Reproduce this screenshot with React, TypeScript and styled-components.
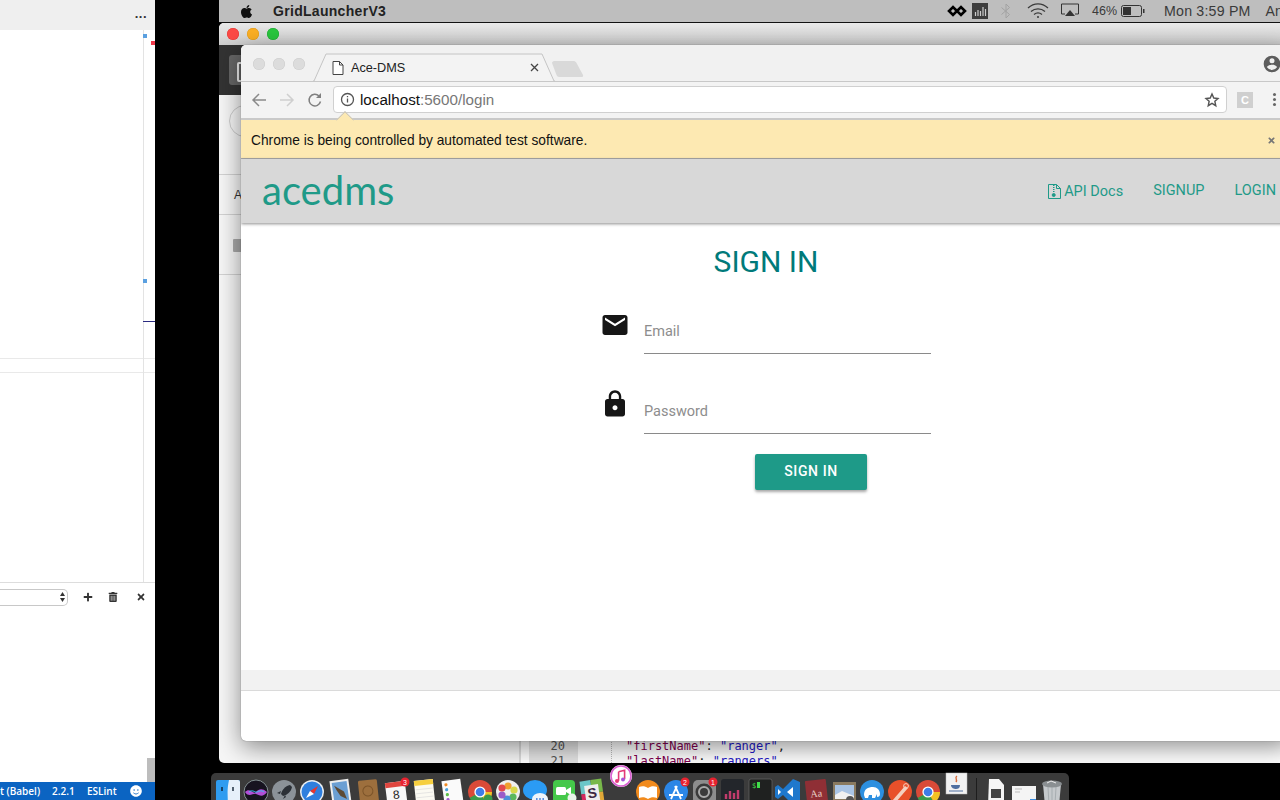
import React from "react";
import styled, { createGlobalStyle } from "styled-components";
import { FaApple, FaPlus, FaTrashAlt, FaTimes, FaSmile } from "react-icons/fa";

const Global = createGlobalStyle`
  html, body { margin: 0; padding: 0; background: #000; overflow: hidden; }
  * { box-sizing: border-box; }
`;

const Desktop = styled.div`
  position: relative;
  width: 1280px;
  height: 800px;
  overflow: hidden;
  background: #000;
  font-family: "Liberation Sans", Arial, sans-serif;
`;

/* ---------- left editor window ---------- */
const EditorWindow = styled.section`
  position: absolute;
  left: 0;
  top: 0;
  width: 155px;
  height: 800px;
  background: #fff;
  display: flex;
  flex-direction: column;
`;
const EditorTabs = styled.div`
  height: 30px;
  flex: none;
  background: #efefef;
  display: flex;
  justify-content: flex-end;
  align-items: center;
  padding: 0 8px 4px 0;
  font-size: 13px;
  font-weight: 700;
  letter-spacing: 0.5px;
  color: #333;
`;
const EditorPane = styled.div`
  position: relative;
  height: 553px;
  flex: none;
  border-bottom: 1px solid #ddd;
  display: flex;
  flex-direction: column;
`;
const GuideLine = styled.div`
  position: absolute;
  left: 143px;
  top: 0;
  bottom: 0;
  width: 1px;
  background: #e3e3e3;
`;
const Marker = styled.i<{ $x: number; $y: number; $c: string; $w?: number; $h?: number }>`
  position: absolute;
  left: ${(p) => p.$x}px;
  top: ${(p) => p.$y}px;
  width: ${(p) => p.$w ?? 4}px;
  height: ${(p) => p.$h ?? 4}px;
  background: ${(p) => p.$c};
`;
const PaneRule = styled.div`
  height: 15px;
  margin-top: 328px;
  border-top: 1px solid #e9e9e9;
  border-bottom: 1px solid #e9e9e9;
`;
const ConsoleBar = styled.div`
  height: 30px;
  flex: none;
  display: flex;
  align-items: center;
  padding-bottom: 2px;
  color: #333;
`;
const FakeSelect = styled.div`
  width: 68px;
  height: 17px;
  border: 1px solid #c8c8c8;
  border-left: 0;
  border-radius: 0 5px 5px 0;
  background: #fff;
  display: flex;
  align-items: center;
  justify-content: flex-end;
  padding-right: 2px;
  margin-right: 15px;
`;
const ConsoleAction = styled.span<{ $w: number }>`
  width: ${(p) => p.$w}px;
  display: flex;
  font-size: 10px;
`;
const EditorFill = styled.div`
  position: relative;
  flex: 1;
`;
const Thumb = styled.div`
  position: absolute;
  right: 0;
  bottom: 0;
  width: 8px;
  height: 24px;
  background: #bdbdbd;
`;
const StatusBar = styled.footer`
  height: 18px;
  flex: none;
  background: #0b64c2;
  color: #fff;
  display: flex;
  align-items: center;
  font-size: 10px;
  font-family: "Open Sans", sans-serif;
  font-weight: 600;
  white-space: nowrap;
  overflow: hidden;
`;
const StatusItem = styled.span<{ $w: number }>`
  width: ${(p) => p.$w}px;
  flex: none;
  display: flex;
  align-items: center;
`;

/* ---------- menu bar ---------- */
const MenuBar = styled.header`
  position: absolute;
  left: 219px;
  top: 0;
  width: 1061px;
  height: 23px;
  background: #bebebe;
  border-bottom: 1px solid #111;
  display: flex;
  align-items: center;
  color: #3a3a3a;
  font-size: 14px;
  white-space: nowrap;
  overflow: hidden;
`;
const AppleSlot = styled.span`
  margin-left: 20px;
  width: 34px;
  display: flex;
  color: #111;
  font-size: 15px;
`;
const AppName = styled.strong`
  color: #222;
  font-size: 14px;
  letter-spacing: 0.3px;
  flex: 1;
`;
const Extras = styled.div`
  display: flex;
  align-items: center;
  width: 333px;
  flex: none;
  svg {
    flex: none;
  }
`;
const ExtrasGap = styled.span`
  width: 13px;
  flex: none;
`;
const Percent = styled.span`
  flex: none;
  font-size: 12.5px;
  margin-right: 4px;
`;
const Clock = styled.span`
  flex: none;
  margin-left: 19px;
  margin-right: 15px;
  font-size: 14.2px;
  letter-spacing: 0.2px;
`;

/* ---------- window behind ---------- */
const BackWindow = styled.section`
  position: absolute;
  left: 219px;
  top: 23px;
  width: 1061px;
  height: 740px;
  border-radius: 5px 0 0 5px;
  background: #f6f6f6;
  display: flex;
  flex-direction: column;
  overflow: hidden;
`;
const BackTitle = styled.div`
  height: 22px;
  flex: none;
  background: linear-gradient(#e9e9e9, #cfcfcf);
  display: flex;
  align-items: center;
  gap: 8px;
  padding-left: 8px;
`;
const Light = styled.i<{ $c: string; $b: string }>`
  width: 12px;
  height: 12px;
  border-radius: 50%;
  background: ${(p) => p.$c};
  box-shadow: inset 0 0 0 0.5px ${(p) => p.$b};
`;
const BackToolbar = styled.div`
  height: 50px;
  flex: none;
  background: #333;
  padding: 10px;
`;
const BackTool = styled.div`
  width: 30px;
  height: 30px;
  border-radius: 3px;
  background: #666;
  padding: 7px 0 0 8px;
  &::after {
    content: "";
    display: block;
    width: 14px;
    height: 16px;
    border: 2px solid #eee;
    border-radius: 2px;
  }
`;
const BackSearch = styled.div`
  height: 80px;
  flex: none;
  border-bottom: 1px solid #d2d2d2;
  padding: 10px 0 0 10px;
  &::after {
    content: "";
    display: block;
    width: 30px;
    height: 30px;
    border-radius: 50%;
    border: 1px solid #ccc;
  }
`;
const BackRow = styled.div`
  height: 40px;
  flex: none;
  border-bottom: 1px solid #d2d2d2;
  padding-left: 15px;
  display: flex;
  align-items: center;
  font-size: 12px;
  color: #333;
`;
const BackFolderRow = styled.div`
  height: 60px;
  flex: none;
  border-bottom: 1px solid #d2d2d2;
  padding: 24px 0 0 14px;
  &::after {
    content: "";
    display: block;
    width: 14px;
    height: 13px;
    background: #aaa;
    border-radius: 1px;
  }
`;
const BackBody = styled.div`
  flex: 1;
  display: flex;
  align-items: flex-end;
  padding-left: 300px;
`;
const Editor = styled.div`
  flex: 1;
  height: 39px;
  border-left: 2px solid #dcdcdc;
  display: flex;
  background: #fff;
  font-family: "DejaVu Sans Mono", monospace;
  font-size: 12px;
  line-height: 15px;
  white-space: pre;
`;
const LineGutter = styled.div`
  width: 49px;
  margin-left: 8px;
  background: #e4e4e4;
  color: #555;
  text-align: right;
  padding: 15px 13px 0 0;
`;
const CodeBlock = styled.div`
  margin-left: 33px;
  border-left: 1px dotted #bbb;
  padding: 15px 0 0 14px;
  color: #222;
`;
const Key = styled.span`
  color: #80004f;
`;
const Val = styled.span`
  color: #2418c8;
`;

/* ---------- chrome window ---------- */
const Chrome = styled.section`
  position: absolute;
  left: 241px;
  top: 45px;
  width: 1050px;
  height: 696px;
  border-radius: 5px 5px 5px 5px;
  background: #fff;
  box-shadow: 0 0 1px rgba(0, 0, 0, 0.6), 0 6px 24px rgba(0, 0, 0, 0.45);
  display: flex;
  flex-direction: column;
  overflow: hidden;
`;
const TabStrip = styled.div`
  height: 37px;
  flex: none;
  background: #f1f1f1;
  border-bottom: 1px solid #c8c8c8;
  display: flex;
  align-items: flex-end;
  padding-left: 12px;
  position: relative;
`;
const GreyLights = styled.div`
  display: flex;
  gap: 8px;
  align-self: flex-start;
  margin-top: 13px;
  width: 66px;
  flex: none;
`;
const GreyLight = styled.i`
  width: 12px;
  height: 12px;
  border-radius: 50%;
  background: #dcdcdc;
  box-shadow: inset 0 0 0 0.5px #ccc;
`;
const TabShape = styled.svg`
  position: absolute;
  left: 72px;
  bottom: -1px;
`;
const TabBody = styled.div`
  position: relative;
  width: 230px;
  height: 27px;
  display: flex;
  align-items: center;
  padding: 0 0 0 13px;
  font-size: 12.7px;
  color: #222;
`;
const TabLabel = styled.span`
  margin-left: 7px;
  flex: 1;
`;
const ProfileSlot = styled.span`
  position: absolute;
  right: 9px;
  top: 9px;
  display: flex;
`;
const NewTab = styled.svg`
  position: absolute;
  left: 310px;
  bottom: 4px;
`;
const Toolbar = styled.div`
  height: 38px;
  flex: none;
  background: #f3f3f3;
  border-bottom: 2px solid #c9c9c9;
  display: flex;
  align-items: center;
  padding: 0 0 1px 10px;
  position: relative;
`;
const NavIcons = styled.div`
  display: flex;
  align-items: center;
  gap: 12px;
  width: 82px;
  flex: none;
`;
const Omnibox = styled.div`
  width: 894px;
  height: 27px;
  flex: none;
  background: #fff;
  border: 1px solid #d0d0d0;
  border-radius: 4px;
  display: flex;
  align-items: center;
  padding: 0 6px 0 6px;
  font-size: 15.2px;
  color: #111;
`;
const UrlDim = styled.span`
  color: #777;
`;
const Url = styled.span`
  margin-left: 5px;
  flex: 1;
`;
const ExtBadge = styled.span`
  width: 16px;
  height: 16px;
  margin-left: 10px;
  background: #cfcfcf;
  color: #fff;
  font-size: 11px;
  font-weight: 700;
  display: flex;
  align-items: center;
  justify-content: center;
`;
const Dots = styled.span`
  margin-left: 20px;
  display: flex;
  flex-direction: column;
  gap: 2px;
  i {
    width: 3px;
    height: 3px;
    border-radius: 50%;
    background: #666;
  }
`;
const BubbleTip = styled.i`
  position: absolute;
  left: 96px;
  bottom: -2px;
  width: 16px;
  height: 16px;
  background: #fde9b2;
  border-left: 1px solid #bdbdbd;
  border-top: 1px solid #bdbdbd;
  transform: translateY(8px) rotate(45deg) scale(0.78);
`;
const InfoBar = styled.div`
  height: 39px;
  flex: none;
  background: #fde9b2;
  border-bottom: 1px solid #a9a9a9;
  display: flex;
  align-items: center;
  padding: 2px 0 0 10px;
  font-size: 13.75px;
  color: #111;
`;
const InfoText = styled.span`
  width: 1016px;
  flex: none;
`;
const InfoClose = styled.span`
  display: flex;
  color: #777;
  font-size: 9px;
`;
const AppNav = styled.nav`
  height: 64px;
  flex: none;
  background: #d8d8d8;
  box-shadow: 0 1px 3px rgba(0, 0, 0, 0.45);
  display: flex;
  align-items: center;
  padding: 0 15px 0 21px;
  font-family: Roboto, sans-serif;
  color: #1f9a88;
  position: relative;
`;
const Logo = styled.div`
  font-family: Lato, sans-serif;
  font-size: 40px;
  color: #1f9a88;
  flex: 1;
  padding-bottom: 3px;
`;
const DocsLink = styled.a`
  display: flex;
  align-items: center;
  font-size: 14.5px;
  margin-right: 30px;
`;
const NavLink = styled.a`
  font-size: 14.5px;
  padding-bottom: 1px;
  &:last-child {
    margin-left: 30px;
  }
`;
const Page = styled.main`
  height: 447px;
  flex: none;
  display: flex;
  flex-direction: column;
  align-items: center;
  font-family: Roboto, sans-serif;
`;
const Title = styled.h1`
  margin: 19px 0 0;
  height: 40px;
  line-height: 40px;
  font-size: 30px;
  font-weight: 400;
  color: #007a7a;
`;
const Form = styled.form`
  width: 328px;
  margin-top: -8px;
  margin-left: 2px;
  display: flex;
  flex-direction: column;
`;
const Row = styled.div`
  height: 80px;
  display: flex;
`;
const FieldIcon = styled.svg<{ $top: number }>`
  margin: ${(p) => p.$top}px 0 0 -3px;
  flex: none;
`;
const Field = styled.div`
  margin-left: 14px;
  flex: 1;
  border-bottom: 1px solid #8a8a8a;
  display: flex;
  align-items: flex-end;
  padding-bottom: 13px;
  font-size: 14.5px;
  color: #8d8d8d;
`;
const Submit = styled.button`
  width: 112px;
  height: 36px;
  margin: 20px 0 0 152px;
  padding: 0 0 2px;
  border: 0;
  border-radius: 2px;
  background: #1e9a88;
  color: #fff;
  font: 500 14px Roboto, sans-serif;
  letter-spacing: 0.6px;
  box-shadow: 0 2px 3px rgba(0, 0, 0, 0.35);
`;
const FootBand = styled.div`
  height: 21px;
  flex: none;
  background: #f2f2f2;
  border-bottom: 1px solid #dadada;
`;

/* ---------- dock ---------- */
const DockBar = styled.div`
  position: absolute;
  left: 211px;
  top: 773px;
  width: 858px;
  height: 27px;
  background: #3b3b3b;
  border-radius: 5px 5px 0 0;
  display: flex;
  padding-left: 3px;
`;
const DockSlot = styled.svg<{ $lift?: number }>`
  width: 28px;
  height: 28px;
  flex: none;
  margin-top: ${(p) => 5 - (p.$lift ?? 0)}px;
  overflow: visible;
`;
const DockSep = styled.i`
  width: 12px;
  flex: none;
  position: relative;
  &::after {
    content: "";
    position: absolute;
    left: 6px;
    top: 5px;
    bottom: 0;
    width: 1px;
    background: #1d1d1d;
  }
`;

const Badge = ({ n, x = 22, y = 3 }: { n: string; x?: number; y?: number }) => (
  <g>
    <circle cx={x} cy={y} r="4.5" fill="#e8222f" />
    <text x={x} y={y + 2.5} fontSize="7" fill="#fff" textAnchor="middle" fontFamily="Liberation Sans">{n}</text>
  </g>
);

const ChromeMark = () => (
  <g>
    <circle cx="14" cy="14" r="12" fill="#d94a38" />
    <path d="M14 14 L3.6 20 A12 12 0 0 0 20 24.4 Z" fill="#3b9a4a" />
    <path d="M14 14 L26 14 A12 12 0 0 1 20 24.4 Z" fill="#f3c225" />
    <circle cx="14" cy="14" r="5.6" fill="#fff" />
    <circle cx="14" cy="14" r="4.3" fill="#3f7de8" />
  </g>
);

const dockArt: { k: string; lift?: number; art: React.ReactNode }[] = [
  { k: "finder", art: (<g><rect x="2" y="2" width="24" height="26" rx="2" fill="#2f9cf0" /><path d="M15 2h9a2 2 0 0 1 2 2v24H13c2-8-1-12 2-26z" fill="#e6f0fa" /><path d="M8 9v4M19 9v4" stroke="#123" strokeWidth="1.4" /></g>) },
  { k: "siri", art: (<g><circle cx="14" cy="14" r="12" fill="#17131f" stroke="#9aa" strokeWidth="0.8" /><path d="M3 14c5-5 8 3 11 0s6-4 11 0c-4 6-8 3-11 2s-7 4-11-2z" fill="#b14fd6" /><path d="M7 14c4-3 6 1 8 0s5-2 7 0" stroke="#35c8f0" fill="none" /></g>) },
  { k: "launch", art: (<g><circle cx="14" cy="14" r="12" fill="#8b9298" /><path d="M20 7c-5 1-8 5-9 9l2 2c4-1 8-4 9-9z" fill="#2b3036" /><path d="M11 13l-4 2 3 1zM15 17l-2 4 3-2z" fill="#2b3036" /></g>) },
  { k: "safari", art: (<g><circle cx="14" cy="14" r="12" fill="#e9eef2" /><circle cx="14" cy="14" r="10.5" fill="#2f7fde" /><path d="M20 8l-8 5 4 3z" fill="#e8352e" /><path d="M8 20l4-7 4 3z" fill="#fff" /></g>) },
  { k: "mail", art: (<g transform="rotate(-8 14 14)"><rect x="5" y="2" width="19" height="25" fill="#eee" /><rect x="7" y="4" width="15" height="21" fill="#6b9fd3" /><path d="M9 7l9 7 2 8-6-4-3-6z" fill="#5d4a35" /></g>) },
  { k: "contacts", art: (<g transform="rotate(-6 14 14)"><rect x="5" y="2" width="19" height="26" rx="1.5" fill="#9d6f3d" /><circle cx="14" cy="13" r="5" fill="none" stroke="#7c5429" /></g>) },
  { k: "calendar", art: (<g><g transform="rotate(-7 14 14)"><rect x="4" y="4" width="20" height="24" fill="#f7f7f7" /><rect x="4" y="4" width="20" height="5" fill="#e0463f" /><text x="14" y="21" fontSize="12" textAnchor="middle" fontFamily="Liberation Sans" fill="#222">8</text></g><Badge n="3" x={23} y={4} /></g>) },
  { k: "notes", art: (<g transform="rotate(-6 14 14)"><rect x="5" y="2" width="19" height="26" fill="#fbfaf2" /><rect x="5" y="2" width="19" height="5" fill="#f6cf3f" /><path d="M6 11h17M6 15h17M6 19h17M6 23h17" stroke="#ddd" strokeWidth="0.7" /></g>) },
  { k: "reminders", art: (<g transform="rotate(-8 14 14)"><rect x="5" y="2" width="19" height="26" fill="#fafafa" /><circle cx="9" cy="6" r="1.6" fill="#f08a24" /><circle cx="9" cy="11" r="1.6" fill="#4aa3df" /><circle cx="9" cy="16" r="1.6" fill="#5ec04a" /><circle cx="9" cy="21" r="1.6" fill="#a35bd0" /></g>) },
  { k: "chrome", art: (<g><ChromeMark /><circle cx="22" cy="21" r="4.5" fill="#3a9a4a" /></g>) },
  { k: "photos", art: (<g><circle cx="14" cy="14" r="12" fill="#efefef" /><circle cx="14" cy="8" r="3.6" fill="#f0a030" /><circle cx="20" cy="12" r="3.6" fill="#d8d84a" /><circle cx="19" cy="19" r="3.6" fill="#5cb85c" /><circle cx="13" cy="21" r="3.6" fill="#4a90d9" /><circle cx="8" cy="17" r="3.6" fill="#9a5bc8" /><circle cx="8" cy="10" r="3.6" fill="#e2474f" /></g>) },
  { k: "messages", art: (<g><ellipse cx="13" cy="12" rx="12" ry="10" fill="#2b9bf4" /><ellipse cx="18" cy="21" rx="8" ry="6" fill="#eef4fa" /><path d="M14 21h8" stroke="#2b6cd4" strokeWidth="1.6" strokeDasharray="1.6 1.6" /></g>) },
  { k: "facetime", art: (<g><rect x="3" y="2" width="22" height="24" rx="4" fill="#45c84a" /><rect x="6" y="9" width="10" height="8" rx="1.5" fill="#fff" /><path d="M16 12l5-3v8l-5-3z" fill="#fff" /><circle cx="22" cy="20" r="4.5" fill="#e8f5e8" /></g>) },
  { k: "slack", art: (<g transform="rotate(-8 14 14)"><rect x="3" y="2" width="11" height="13" fill="#6cc6c8" /><rect x="14" y="2" width="11" height="13" fill="#78b84a" /><rect x="3" y="15" width="11" height="13" fill="#d4295f" /><rect x="14" y="15" width="11" height="13" fill="#e0a838" /><rect x="7" y="7" width="14" height="16" fill="#eee" /><text x="14" y="20" fontSize="14" fontWeight="700" textAnchor="middle" fontFamily="Liberation Sans" fill="#402a44">S</text></g>) },
  { k: "itunes", lift: 14, art: (<g><circle cx="15" cy="12" r="11" fill="#fff" /><circle cx="15" cy="12" r="10" fill="none" stroke="#d85fd0" strokeWidth="1.6" /><path d="M12.6 7.8l6-1.6v9M12.6 7.8v9" stroke="#e43a78" strokeWidth="1.6" fill="none" /><circle cx="11" cy="17" r="2" fill="#e43a78" /><circle cx="17" cy="15.5" r="2" fill="#a854d8" /></g>) },
  { k: "books", art: (<g><circle cx="14" cy="14" r="12" fill="#f28b1d" /><path d="M5 9c3-1 6-1 9 1 3-2 6-2 9-1v11c-3-1-6-1-9 1-3-2-6-2-9-1z" fill="#fff" /></g>) },
  { k: "appstore", art: (<g><circle cx="14" cy="14" r="12" fill="#2b86e6" /><path d="M9 21l6-13M19 21l-6-13M7 17h14" stroke="#fff" strokeWidth="1.8" /><Badge n="2" x={23} y={4} /></g>) },
  { k: "prefs", art: (<g><rect x="3" y="2" width="23" height="24" rx="5" fill="#8d8d8d" /><circle cx="14" cy="14" r="8.5" fill="#3a3a3a" /><circle cx="14" cy="14" r="5" fill="none" stroke="#aaa" strokeWidth="2" /><Badge n="1" x={23} y={4} /></g>) },
  { k: "istat", art: (<g><rect x="3" y="1" width="23" height="26" rx="3" fill="#23262b" /><path d="M8 16v5M12 13v8M16 15v6M20 12v9" stroke="#c23c6c" strokeWidth="2.4" /></g>) },
  { k: "term", art: (<g><rect x="3" y="1" width="23" height="26" rx="2" fill="#1f2120" stroke="#666" strokeWidth="0.7" /><text x="6" y="10" fontSize="7" fontFamily="DejaVu Sans Mono" fill="#3fdc4a">$</text><rect x="11" y="4" width="3" height="6" fill="#3fdc4a" /></g>) },
  { k: "vscode", art: (<g><path d="M19 1l7 3v20l-7 3L9 17l-5 4-3-2v-10l3-2 5 4z" fill="#1f78cc" /><path d="M19 9l-6 5 6 5z" fill="#fff" /><path d="M4 11l3 3-3 3z" fill="#fff" /></g>) },
  { k: "dict", art: (<g transform="rotate(-6 14 14)"><rect x="4" y="2" width="21" height="26" rx="1" fill="#8f2f35" /><text x="14" y="19" fontSize="10" textAnchor="middle" fontFamily="Liberation Serif" fill="#e8d0c8">Aa</text></g>) },
  { k: "preview", art: (<g><rect x="3" y="4" width="23" height="24" fill="#8a7a5f" /><rect x="5" y="7" width="19" height="14" fill="#a9c4e4" /><path d="M5 17l7-4 12 5v3H5z" fill="#f0f0f0" /><circle cx="20" cy="22" r="4" fill="#555" /></g>) },
  { k: "sequel", art: (<g><circle cx="14" cy="14" r="12" fill="#2c8fe0" /><path d="M6 17c0-6 4-8 9-8 4 0 7 3 7 7 0 2-1 3-3 3v-3l-2 4h-3v-3h-3l-1 3H7z" fill="#fff" /></g>) },
  { k: "paw", art: (<g><circle cx="14" cy="14" r="12" fill="#e8502a" /><path d="M6 23L19 8l3 2L10 24z" fill="#f4d0c0" /><circle cx="20" cy="8" r="2.4" fill="none" stroke="#f4d0c0" /></g>) },
  { k: "chrome2", art: <ChromeMark /> },
  { k: "java", lift: 6, art: (<g><rect x="4" y="1" width="21" height="21" fill="#f2f2f2" stroke="#bbb" strokeWidth="0.5" /><path d="M9 13h9c0 3-2 4-4 4s-5-1-5-4z" fill="#4f6fa0" /><path d="M15 4c-3 2 1 3-1 6" stroke="#d86b3a" fill="none" strokeWidth="1.4" /><path d="M7 19h14" stroke="#4f6fa0" /></g>) },
];

const dockAfter: { k: string; art: React.ReactNode }[] = [
  { k: "doc", art: (<g><path d="M7 1h10l5 6v21H6z" fill="#f5f5f5" /><rect x="9" y="11" width="10" height="9" fill="#444" /></g>) },
  { k: "shot", art: (<g><rect x="2" y="8" width="24" height="20" fill="#f4f4f4" /><path d="M5 11h7M5 14h5" stroke="#bbb" /><rect x="20" y="21" width="6" height="7" fill="#3a8ee0" /></g>) },
  { k: "trash", art: (<g><path d="M5 6h18l-2 22H7z" fill="#c5c9cc" /><ellipse cx="14" cy="6" rx="10" ry="3.4" fill="#8a8f92" /><path d="M10 9l1 18M14 9v18M18 9l-1 18" stroke="#9aa0a4" strokeWidth="0.7" /><path d="M9 5l4-2 5 2" stroke="#eee" fill="none" /></g>) },
];

const Back = (
  <svg width="16" height="16" viewBox="0 0 16 16" fill="none" stroke="#8a8a8a" strokeWidth="1.5"><path d="M15 8H2M8 2L2 8l6 6" /></svg>
);
const Forward = (
  <svg width="16" height="16" viewBox="0 0 16 16" fill="none" stroke="#cfcfcf" strokeWidth="1.5"><path d="M1 8h13M8 2l6 6-6 6" /></svg>
);
const Reload = (
  <svg width="16" height="16" viewBox="0 0 16 16" fill="none" stroke="#808080" strokeWidth="1.5"><path d="M13.5 9.5A5.8 5.8 0 1 1 12 4" /><path d="M14 1v5H9" fill="#808080" stroke="none" /></svg>
);

export default function App() {
  return (
    <>
      <Global />
      <Desktop>
        <EditorWindow>
          <EditorTabs>...</EditorTabs>
          <EditorPane>
            <GuideLine />
            <Marker $x={143} $y={4} $c="#5aa0e0" />
            <Marker $x={151} $y={11} $c="#f0384a" />
            <Marker $x={143} $y={249} $c="#5aa0e0" />
            <Marker $x={143} $y={291} $c="#2a2a80" $w={12} $h={1} />
            <PaneRule />
          </EditorPane>
          <ConsoleBar>
            <FakeSelect>
              <svg width="5" height="10" viewBox="0 0 5 10" fill="#333"><path d="M2.5 0L5 4H0zM2.5 10L0 6h5z" /></svg>
            </FakeSelect>
            <ConsoleAction $w={25}><FaPlus /></ConsoleAction>
            <ConsoleAction $w={28}><FaTrashAlt /></ConsoleAction>
            <ConsoleAction $w={10}><FaTimes /></ConsoleAction>
          </ConsoleBar>
          <EditorFill><Thumb /></EditorFill>
          <StatusBar>
            <StatusItem $w={52}>t (Babel)</StatusItem>
            <StatusItem $w={35}>2.2.1</StatusItem>
            <StatusItem $w={43}>ESLint</StatusItem>
            <StatusItem $w={14}><FaSmile size={12} /></StatusItem>
          </StatusBar>
        </EditorWindow>

        <MenuBar>
          <AppleSlot><FaApple /></AppleSlot>
          <AppName>GridLauncherV3</AppName>
          <Extras>
            <svg width="20" height="12" viewBox="0 0 20 12" fill="none" stroke="#000" strokeWidth="2.6" style={{ marginRight: 5 }}><path d="M10 6L6 2 2 6l4 4zM10 6l4-4 4 4-4 4z" /></svg>
            <svg width="16" height="16" viewBox="0 0 16 16"><rect width="16" height="16" fill="#3d3d3d" /><path d="M3.5 13V9M6 13V7M8.5 13V8M11 13V4M13.5 13V6" stroke="#ccc" strokeWidth="1.2" /></svg>
            <svg width="12" height="16" viewBox="0 0 12 16" fill="none" stroke="#a2a2a2" strokeWidth="1" style={{ marginLeft: 12 }}><path d="M1.5 4.5l8 7L6 15V1l3.500 3.500-8 7" /></svg>
            <svg width="22" height="16" viewBox="0 0 22 16" fill="none" stroke="#3a3a3a" strokeWidth="1.3" style={{ marginLeft: 15 }}><path d="M1 5c6-5.500 14-5.500 20 0M4 8.500c4-3.500 10-3.500 14 0M7 11.500c2.500-2 5.500-2 8 0" /><circle cx="11" cy="14" r="1" fill="#3a3a3a" stroke="none" /></svg>
            <svg width="18" height="16" viewBox="0 0 18 16" fill="none" stroke="#333" strokeWidth="1" style={{ marginLeft: 12 }}><path d="M4 11H.5V1h17v10H14" /><path d="M9 7l5 6H4z" fill="#333" stroke="none" /></svg>
            <ExtrasGap />
            <Percent>46%</Percent>
            <svg width="24" height="12" viewBox="0 0 24 12"><rect x="0.5" y="0.5" width="20" height="11" rx="2" fill="none" stroke="#333" /><rect x="2" y="2" width="8" height="8" fill="#333" /><rect x="22" y="4" width="1.500" height="4" fill="#333" /></svg>
            <Clock>Mon 3:59 PM</Clock>
            <span>An</span>
          </Extras>
        </MenuBar>

        <BackWindow>
          <BackTitle>
            <Light $c="#fc4a46" $b="#e03a36" />
            <Light $c="#fdb024" $b="#e09a1a" />
            <Light $c="#2ac83f" $b="#1eaa32" />
          </BackTitle>
          <BackToolbar><BackTool /></BackToolbar>
          <BackSearch />
          <BackRow>A</BackRow>
          <BackFolderRow />
          <BackBody>
            <Editor>
              <LineGutter>20{"\n"}21</LineGutter>
              <CodeBlock>
                <Key>"firstName"</Key>: <Val>"ranger"</Val>,{"\n"}
                <Key>"lastName"</Key>: <Val>"rangers"</Val>
              </CodeBlock>
            </Editor>
          </BackBody>
        </BackWindow>

        <Chrome>
          <TabStrip>
            <GreyLights><GreyLight /><GreyLight /><GreyLight /></GreyLights>
            <TabShape width="242" height="29" viewBox="0 0 242 29" fill="#f3f3f3" stroke="#c4c4c4"><path d="M0 28h1L13 1h216l12 27h1" /></TabShape>
            <TabBody>
              <svg width="12" height="14" viewBox="0 0 12 14" fill="#fff" stroke="#444" strokeWidth="1"><path d="M1 .5h6.500L11 4v9.500H1zM7.500.5V4H11" /></svg>
              <TabLabel>Ace-DMS</TabLabel>
              <svg width="9" height="9" viewBox="0 0 9 9" stroke="#444" strokeWidth="1.3" style={{ marginRight: 10 }}><path d="M1 1l7 7M8 1L1 8" /></svg>
            </TabBody>
            <NewTab width="34" height="16" viewBox="0 0 34 16" fill="#d9d9d9"><path d="M1 2c0-1 1-2 2-2h20c1 0 2 1 2.500 2L32 14c.3 1 0 2-1 2H8c-1 0-2-1-2.500-2z" /></NewTab>
            <ProfileSlot>
              <svg width="20" height="20" viewBox="0 0 24 24" fill="#5d5d5d"><path d="M12 2a10 10 0 1 0 0 20 10 10 0 0 0 0-20zm0 3a3 3 0 1 1 0 6 3 3 0 0 1 0-6zm0 14.200a7.200 7.200 0 0 1-6-3.220c.03-2 4-3.080 6-3.080s5.970 1.090 6 3.080a7.200 7.200 0 0 1-6 3.220z" /></svg>
            </ProfileSlot>
          </TabStrip>
          <Toolbar>
            <NavIcons>{Back}{Forward}{Reload}</NavIcons>
            <Omnibox>
              <svg width="15" height="15" viewBox="0 0 15 15" fill="none" stroke="#555" strokeWidth="1.300"><circle cx="7.500" cy="7.500" r="6" /><path d="M7.500 6.500v4M7.500 4v1.300" /></svg>
              <Url>localhost<UrlDim>:5600/login</UrlDim></Url>
              <svg width="16" height="16" viewBox="0 0 24 24" fill="none" stroke="#555" strokeWidth="2.200"><path d="M12 3l2.700 6 6.300.7-4.700 4.300 1.300 6.500L12 17.200 6.400 20.500l1.300-6.500L3 9.700 9.300 9z" /></svg>
            </Omnibox>
            <ExtBadge>C</ExtBadge>
            <Dots><i /><i /><i /></Dots>
            <BubbleTip />
          </Toolbar>
          <InfoBar>
            <InfoText>Chrome is being controlled by automated test software.</InfoText>
            <InfoClose><FaTimes /></InfoClose>
          </InfoBar>
          <AppNav>
            <Logo>acedms</Logo>
            <DocsLink>
              <svg width="13" height="15" viewBox="0 0 13 15" fill="none" stroke="#1f9a88" strokeWidth="1" style={{ marginRight: 3 }}><path d="M.5.500h8l4 4v10H.500zM8.500.500v4h4M5 1.500h1.500M5 3.500h1.500M5 5.500h1.500M5 7.500h1.500" /><circle cx="5.700" cy="11" r="1.500" fill="#1f9a88" /></svg>
              API Docs
            </DocsLink>
            <NavLink>SIGNUP</NavLink>
            <NavLink>LOGIN</NavLink>
          </AppNav>
          <Page>
            <Title>SIGN IN</Title>
            <Form>
              <Row>
                <FieldIcon $top={36} width="30" height="30" viewBox="0 0 24 24" fill="#161616"><path d="M20 4H4c-1.100 0-1.990.9-1.990 2L2 18c0 1.100.9 2 2 2h16c1.100 0 2-.9 2-2V6c0-1.100-.9-2-2-2zm0 4l-8 5-8-5V6l8 5 8-5v2z" /></FieldIcon>
                <Field>Email</Field>
              </Row>
              <Row>
                <FieldIcon $top={35} width="30" height="30" viewBox="0 0 24 24" fill="#161616"><path d="M18 8h-1V6c0-2.760-2.240-5-5-5S7 3.240 7 6v2H6c-1.100 0-2 .9-2 2v10c0 1.100.9 2 2 2h12c1.100 0 2-.9 2-2V10c0-1.100-.9-2-2-2zm-6 9c-1.100 0-2-.9-2-2s.9-2 2-2 2 .9 2 2-.9 2-2 2zm3.100-9H8.900V6c0-1.710 1.390-3.100 3.100-3.100 1.710 0 3.100 1.390 3.100 3.100v2z" /></FieldIcon>
                <Field>Password</Field>
              </Row>
              <Submit type="button">SIGN IN</Submit>
            </Form>
          </Page>
          <FootBand />
        </Chrome>

        <DockBar>
          {dockArt.map((d) => (
            <DockSlot key={d.k} $lift={d.lift} viewBox="0 0 28 28">{d.art}</DockSlot>
          ))}
          <DockSep />
          {dockAfter.map((d) => (
            <DockSlot key={d.k} viewBox="0 0 28 28">{d.art}</DockSlot>
          ))}
        </DockBar>
      </Desktop>
    </>
  );
}
